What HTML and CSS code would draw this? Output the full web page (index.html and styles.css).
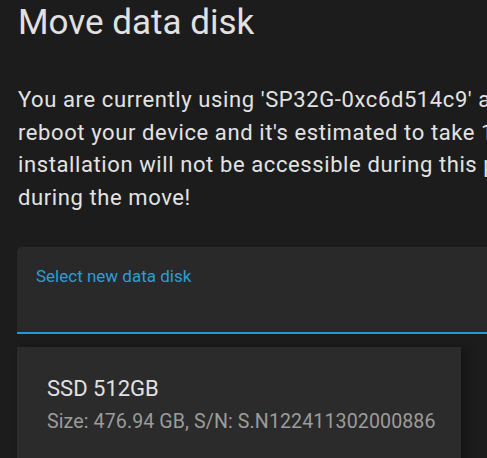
FILE: index.html
```html
<!DOCTYPE html>
<html lang="en">
<head>
<meta charset="utf-8">
<title>Move data disk</title>
<link rel="stylesheet" href="styles.css">
</head>
<body>
<div class="dialog">
  <h2 class="title">Move data disk</h2>
  <p class="body-text">
    <span class="line">You are currently using 'SP32G-0xc6d514c9' as data disk. Moving the data disk will</span>
    <span class="line">reboot your device and it's estimated to take 10 minutes. Your Home Assistant</span>
    <span class="line">installation will not be accessible during this period. Do not disconnect the power</span>
    <span class="line">during the move!</span>
  </p>
  <div class="select">
    <div class="field">
      <span class="label">Select new data disk</span>
    </div>
    <div class="menu">
      <div class="item">
        <div class="primary">SSD 512GB</div>
        <div class="secondary">Size: 476.94 GB, S/N: S.N122411302000886</div>
      </div>
    </div>
  </div>
</div>
</body>
</html>
```
FILE: styles.css
```css
html, body {
  margin: 0;
  padding: 0;
  background: #1c1c1c;
  overflow: hidden;
  width: 487px;
  height: 458px;
}

.dialog {
  font-family: Roboto, "Liberation Sans", sans-serif;
  padding-left: 18px;
  width: 900px;
}

.title {
  margin: 0;
  padding-top: 3px;
  font-size: 35px;
  line-height: 40px;
  font-weight: 400;
  color: #e1e1e1;
}

.body-text {
  margin: 41px 0 0 0;
  font-size: 22px;
  line-height: 32.5px;
  letter-spacing: 0.6px;
  color: #e3e3e3;
}

.line {
  display: block;
  white-space: nowrap;
}

.select {
  margin: 33px 0 0 -1px;
}

.field {
  background: #292929;
  border-radius: 5px 5px 0 0;
  border-bottom: 2px solid #1e9ae0;
  padding: 19px 0 0 19px;
  box-sizing: content-box;
  height: 66px;
}

.label {
  display: block;
  font-size: 17px;
  line-height: 20px;
  color: #2b9dd9;
}

.menu {
  margin-top: 13px;
  width: 444px;
  height: 200px;
  background: #2b2b2b;
  box-shadow: 6px 0 8px rgba(0, 0, 0, 0.25);
}

.item {
  padding: 28px 0 0 30px;
}

.primary {
  font-size: 22px;
  line-height: 28px;
  color: #e1e1e1;
}

.secondary {
  margin-top: 5px;
  font-size: 19.6px;
  line-height: 28px;
  letter-spacing: 0.1px;
  color: #9c9c9c;
}
```
